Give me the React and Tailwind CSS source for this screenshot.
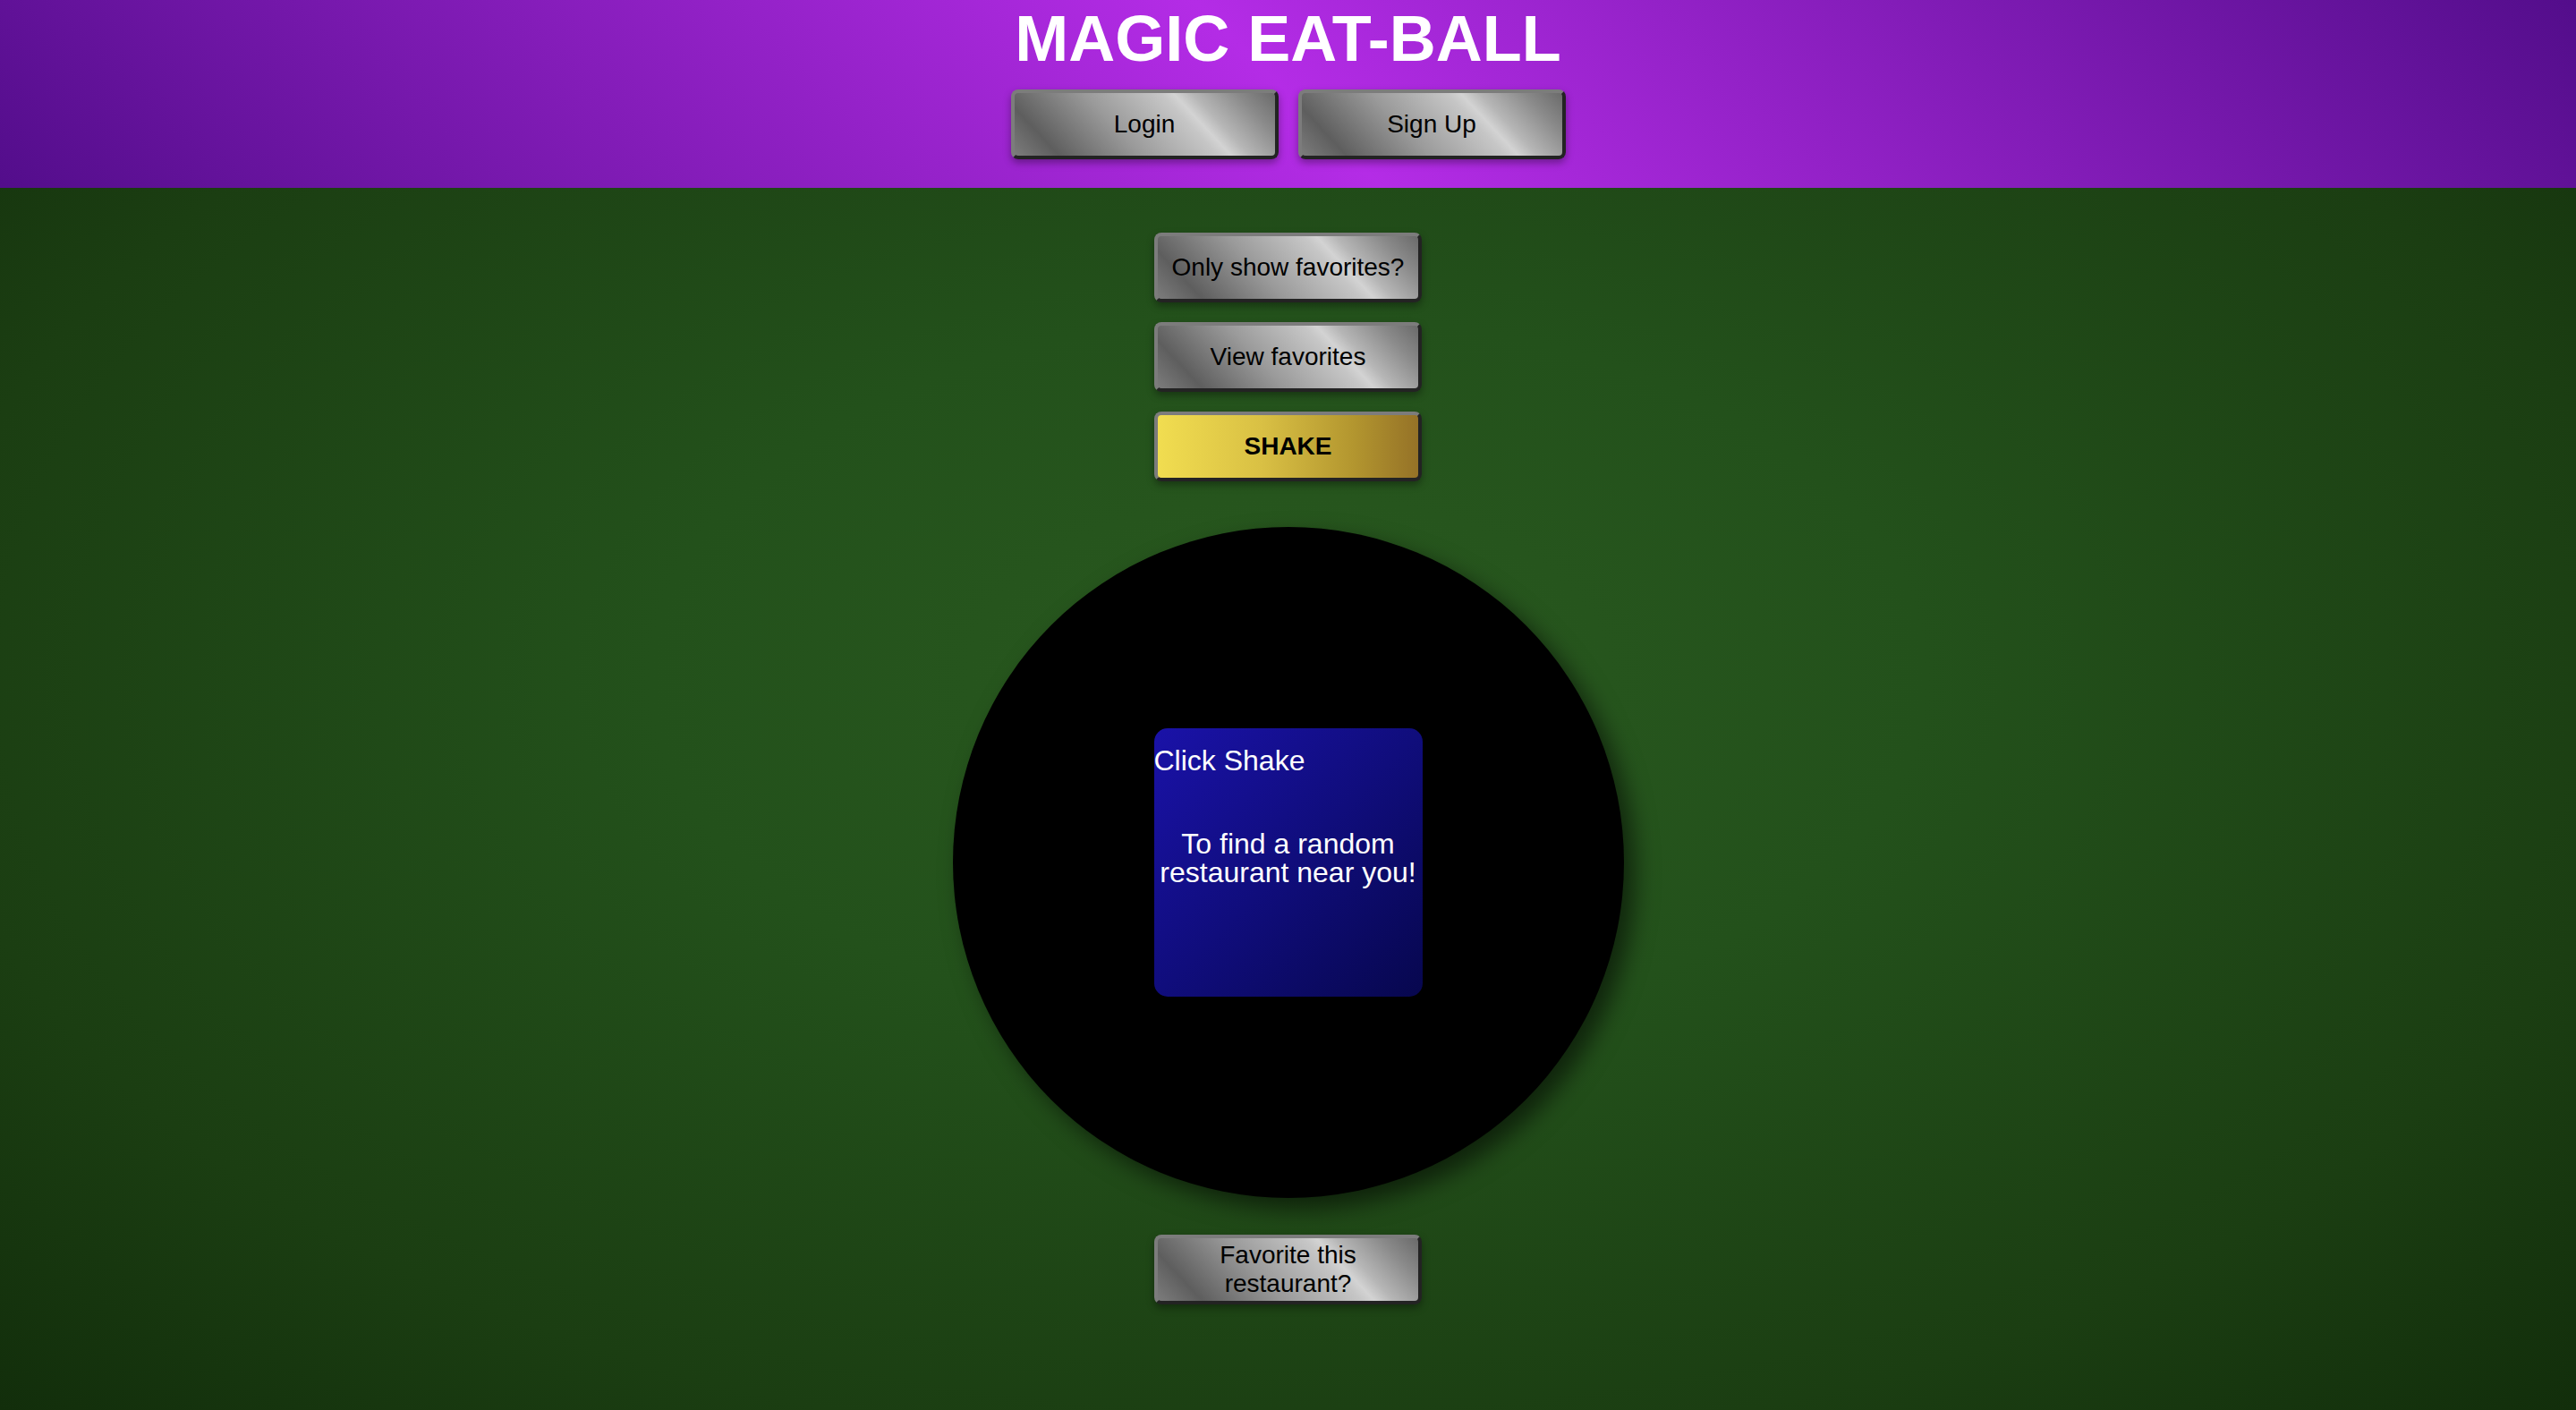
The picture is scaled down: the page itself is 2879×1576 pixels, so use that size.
import React from "react";

const metal =
  "w-[299px] h-[78px] flex items-center justify-center text-center text-[28px] leading-[1.15] text-black rounded-[8px] border-4 border-t-[#7c7c7c] border-l-[#7c7c7c] border-r-[#232323] border-b-[#232323] shadow-[0_4px_8px_rgba(0,0,0,0.35)] bg-[linear-gradient(47deg,#7c7c7c_0%,#5e5e5e_14%,#9a9a9a_40%,#c6c6c6_64%,#d3d3d3_68%,#b6b6b6_74%,#8a8a8a_88%,#6a6a6a_100%)]";

export default function App() {
  return (
    <div className="min-h-screen flex flex-col font-['Liberation_Sans',Arial,sans-serif]">
      <header className="h-[210px] flex flex-col items-center bg-[linear-gradient(45deg,#530d8b_0%,#b42ce6_50%,#530d8b_100%)]">
        <h1 className="mt-[7px] text-[72px] leading-none font-bold text-white">MAGIC EAT-BALL</h1>
        <div className="mt-[21px] flex gap-[22px]">
          <button className={metal}>Login</button>
          <button className={metal}>Sign Up</button>
        </div>
      </header>
      <main className="flex-1 flex flex-col items-center pt-[50px] pb-[118px] bg-[radial-gradient(ellipse_at_50%_40%,#29591f_0%,#23511b_35%,#1b3e12_75%,#122e0b_100%)]">
        <div className="flex flex-col gap-[22px]">
          <button className={metal}>Only show favorites?</button>
          <button className={metal}>View favorites</button>
          <button className="w-[299px] h-[78px] flex items-center justify-center text-[28px] font-bold text-black rounded-[8px] border-4 border-t-[#7c7c7c] border-l-[#7c7c7c] border-r-[#232323] border-b-[#232323] shadow-[0_4px_8px_rgba(0,0,0,0.35)] bg-[linear-gradient(90deg,#f1dd50_0%,#d9c044_40%,#b3962f_75%,#957227_100%)]">
            SHAKE
          </button>
        </div>
        <div className="mt-[51px] w-[750px] h-[750px] rounded-full bg-black flex items-center justify-center shadow-[12px_12px_26px_rgba(0,0,0,0.55)]">
          <div className="w-[300px] h-[300px] rounded-[15px] bg-[linear-gradient(135deg,#1a12a8_0%,#100d7c_50%,#07074e_100%)] text-white pt-[20px]">
            <div className="text-[32px] leading-none">Click Shake</div>
            <div className="mt-[61px] text-[32px] leading-none text-center">
              To find a random
              <br />
              restaurant near you!
            </div>
          </div>
        </div>
        <button className={"mt-[41px] " + metal}>
          Favorite this
          <br />
          restaurant?
        </button>
      </main>
    </div>
  );
}
